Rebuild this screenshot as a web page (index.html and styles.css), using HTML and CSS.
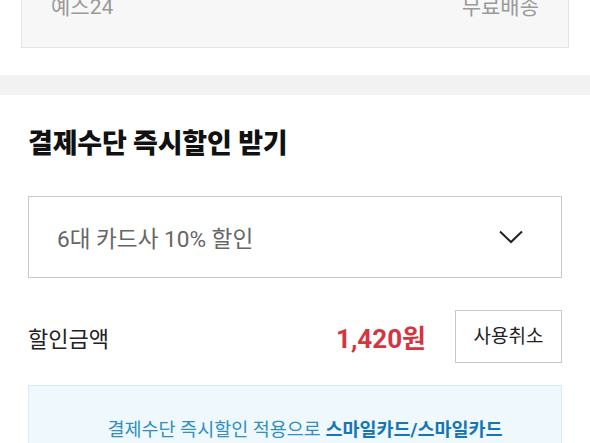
FILE: index.html
```html
<!DOCTYPE html>
<html lang="ko">
<head>
	<meta charset="UTF-8">
	<title>결제수단 즉시할인</title>
	<link rel="stylesheet" href="styles.css">
</head>
<body>
	<div class="seller">
		<div class="seller-box">
			<span>예스24</span>
			<span>무료배송</span>
		</div>
	</div>
	<div class="gap"></div>
	<div class="discount">
		<h2>결제수단 즉시할인 받기</h2>
		<div class="select">
			<span>6대 카드사 10% 할인</span>
			<svg width="24" height="14" viewBox="0 0 24 14"><path d="M1 1.5 L12 12 L23 1.5" fill="none" stroke="#222" stroke-width="2"/></svg>
		</div>
		<div class="amount">
			<div class="label">할인금액</div>
			<div class="price">1,420원</div>
			<a class="cancel" href="#">사용취소</a>
		</div>
		<div class="notice">
			결제수단 즉시할인 적용으로 <b>스마일카드/스마일카드</b>
		</div>
	</div>
</body>
</html>
```

FILE: styles.css
```css
*{margin:0; padding:0; box-sizing:border-box;}
body{
	font-family: Roboto, "Noto Sans CJK KR", sans-serif;
	background:#fff;
	color:#222;
	width:590px;
	overflow:hidden;
}
.seller{
	padding:0 21px 27px 21px;
}
.seller-box{
	margin-top:-5px;
	height:53px;
	background:#f7f7f7;
	border:solid 1px #e4e4e4;
	border-top:none;
	padding:0 29px 0 29px;
	display:flex;
	justify-content:space-between;
	font-size:21px;
	line-height:24px;
	color:#9a9a9a;
}
.gap{
	height:20px;
	background:#f2f2f2;
}
.discount{
	padding:31px 28px 0 28px;
}
.discount h2{
	font-size:27px;
	font-weight:900;
	line-height:36px;
	color:#111;
	letter-spacing:-0.2px;
}
.select{
	margin-top:34px;
	height:82px;
	border:solid 1px #c9c9c9;
	display:flex;
	align-items:center;
	justify-content:space-between;
	padding:0 38px 0 28px;
	font-size:22.6px;
	color:#666;
}
.select svg{display:block;}
.amount{
	margin-top:32px;
	display:flex;
	align-items:center;
}
.amount .label{
	flex:1;
	font-size:22px;
	color:#222;
}
.amount .price{
	font-size:26px;
	font-weight:bold;
	color:#d4363f;
	margin-right:29px;
}
.cancel{
	display:block;
	width:107px;
	height:53px;
	line-height:51px;
	border:solid 1px #c9c9c9;
	text-align:center;
	font-size:19px;
	color:#222;
	text-decoration:none;
}
.notice{
	margin-top:22px;
	height:80px;
	background:#eef8fd;
	border:solid 1px #dbe9f1;
	padding:29px 0 0 20px;
	text-align:center;
	font-size:18.5px;
	color:#2f8fc0;
}
.notice b{
	color:#1576b6;
}
```
